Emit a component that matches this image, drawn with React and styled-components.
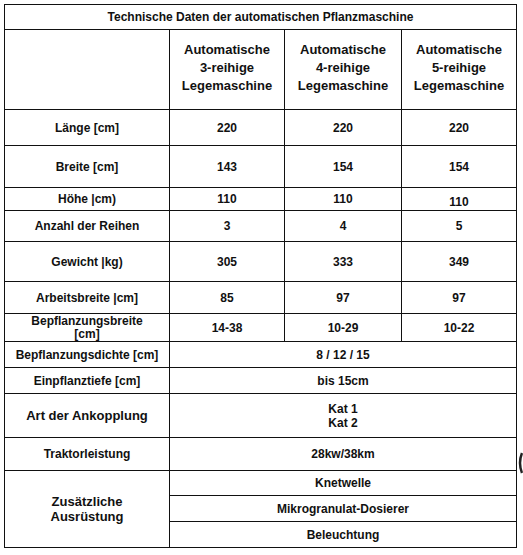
import React from 'react';
import styled, { createGlobalStyle } from 'styled-components';

const Global = createGlobalStyle`
  body {
    margin: 0;
    background: #fff;
    font-family: "Liberation Sans", Arial, sans-serif;
    color: #111;
  }
`;

const Page = styled.div`
  position: relative;
  width: 523px;
  height: 555px;
  padding: 4px 0 0 4px;
  box-sizing: border-box;
  overflow: hidden;
`;

const Grid = styled.div`
  display: grid;
  width: 513px;
  grid-template-columns: 164px 114px 116px 114px;
  grid-template-rows: 24px 79px 35px 41px 22px 30px 39px 31px 27px 25px 25px 43px 32px 24px 25px 25px;
  gap: 1px;
  padding: 1px;
  box-sizing: border-box;
  background: #111;
`;

const Cell = styled.div`
  background: #fff;
  display: flex;
  align-items: center;
  justify-content: center;
  text-align: center;
  font-weight: bold;
  font-size: ${p => (p.$big ? '13px' : '12px')};
  line-height: ${p => (p.$lh ? p.$lh : 14)}px;
  grid-column: ${p => (p.$span ? `span ${p.$span}` : 'auto')};
  grid-row: ${p => (p.$rows ? `span ${p.$rows}` : 'auto')};
  padding-top: ${p => p.$nudge || 0}px;
  overflow: hidden;
  box-sizing: border-box;
`;

const Title = styled(Cell)`
  grid-column: span 4;
  font-size: 12px;
`;

const Head = styled(Cell)`
  font-size: 13px;
  line-height: 18px;
  padding-bottom: 4px;
`;

const Label = styled(Cell)`
  padding-left: 2px;
  padding-right: 2px;
`;

const Wrap = styled(Label)`
  align-items: flex-start;
  padding-top: 1px;
  line-height: 13px;
`;

const Stray = styled.svg`
  position: absolute;
  left: 517px;
  top: 452px;
`;

const specs = [
  ['Länge [cm]', '220', '220', '220'],
  ['Breite [cm]', '143', '154', '154'],
  ['Höhe |cm)', '110', '110', '110'],
  ['Anzahl der Reihen', '3', '4', '5'],
  ['Gewicht |kg)', '305', '333', '349'],
  ['Arbeitsbreite |cm]', '85', '97', '97'],
];

const shared = [
  ['Bepflanzungsdichte [cm]', ['8 / 12 / 15']],
  ['Einpflanztiefe [cm]', ['bis 15cm']],
  ['Art der Ankopplung', ['Kat 1', 'Kat 2'], true],
  ['Traktorleistung', ['28kw/38km']],
];

const extras = ['Knetwelle', 'Mikrogranulat-Dosierer', 'Beleuchtung'];

export default function App() {
  return (
    <Page>
      <Global />
      <Grid>
        <Title>Technische Daten der automatischen Pflanzmaschine</Title>

        <Cell />
        <Head>Automatische<br />3-reihige<br />Legemaschine</Head>
        <Head>Automatische<br />4-reihige<br />Legemaschine</Head>
        <Head>Automatische<br />5-reihige<br />Legemaschine</Head>

        {specs.map(row => (
          <React.Fragment key={row[0]}>
            <Label>{row[0]}</Label>
            {row.slice(1).map((v, i) => (
              <Cell key={i} $nudge={row[0] === 'Höhe |cm)' && i === 2 ? 5 : 0}>{v}</Cell>
            ))}
          </React.Fragment>
        ))}

        <Wrap>Bepflanzungsbreite<br />[cm]</Wrap>
        <Cell>14-38</Cell>
        <Cell>10-29</Cell>
        <Cell>10-22</Cell>

        {shared.map(([label, vals, big]) => (
          <React.Fragment key={label}>
            <Label $big={big}>{label}</Label>
            <Cell $span={3}>
              <div>
                {vals.map(v => <div key={v}>{v}</div>)}
              </div>
            </Cell>
          </React.Fragment>
        ))}

        <Label $big $rows={3} $lh={15}>Zusätzliche<br />Ausrüstung</Label>
        {extras.map(x => (
          <Cell key={x} $span={3}>{x}</Cell>
        ))}
      </Grid>
      <Stray width="6" height="22" viewBox="0 0 6 22">
        <path d="M5 1 Q1 11 5 21" fill="none" stroke="#222" strokeWidth="2.5" />
      </Stray>
    </Page>
  );
}
